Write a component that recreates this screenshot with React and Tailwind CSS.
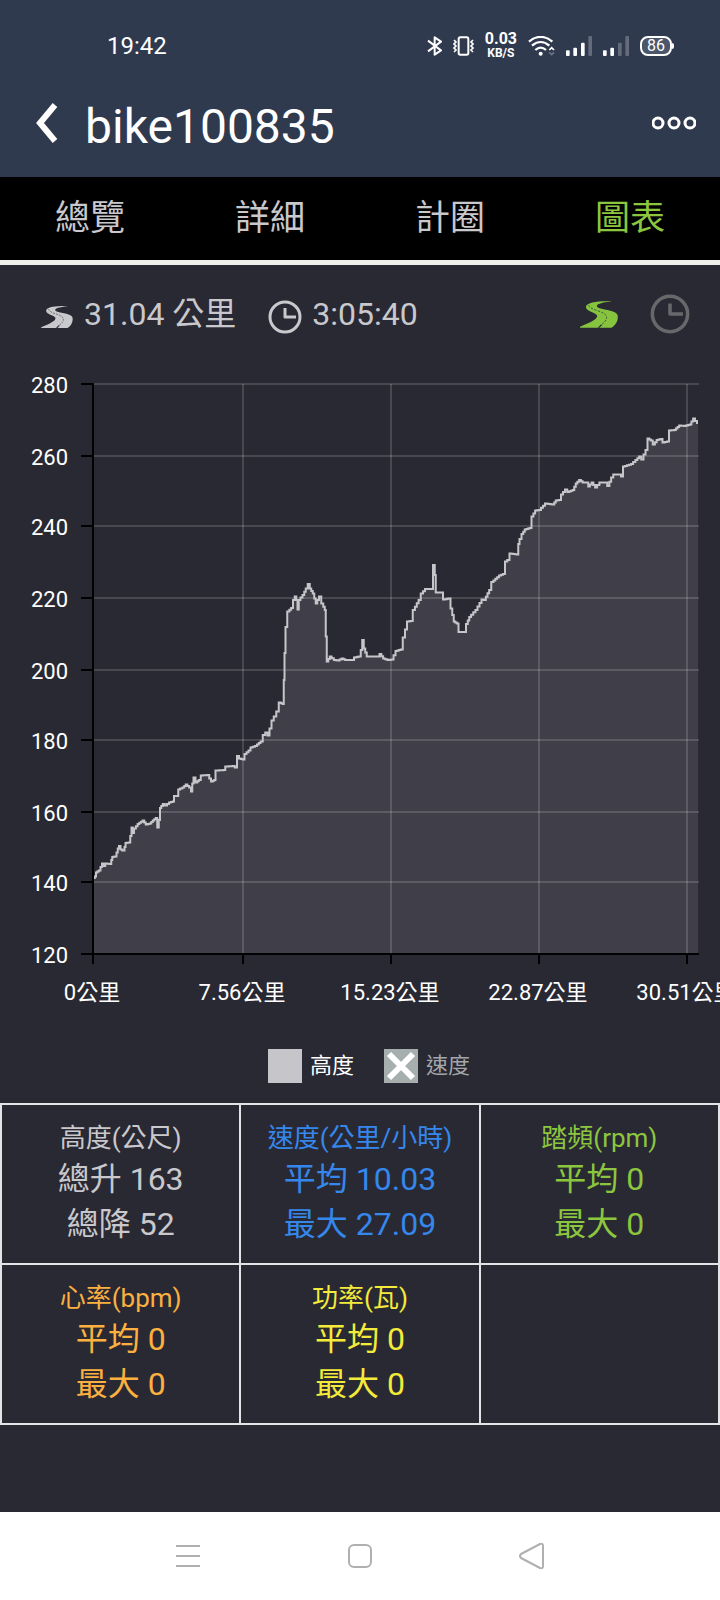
import React, { useState } from 'react';

const TABS = ['總覽', '詳細', '計圈', '圖表'];

const Y_TICKS = [
  { label: '280', y: 384 },
  { label: '260', y: 456 },
  { label: '240', y: 526 },
  { label: '220', y: 598 },
  { label: '200', y: 670 },
  { label: '180', y: 740 },
  { label: '160', y: 812 },
  { label: '140', y: 882 },
  { label: '120', y: 954 }
];

const X_TICKS = [
  { label: '0公里', x: 93 },
  { label: '7.56公里', x: 243 },
  { label: '15.23公里', x: 391 },
  { label: '22.87公里', x: 539 },
  { label: '30.51公里', x: 687 }
];

// altitude trace, in chart units
const ALTITUDE = `94,878 95.5,876.5 96.5,872.5 99.5,870.5 101.5,867 102.5,863.5 104.5,866 106,863.5 110.5,864 112,860
112.5,857 115.5,856.5 117.5,852.5 118,848.5 120,846 121,849.5 123.5,850.5 125.5,847 125.5,843 130,842.5 130.5,836
132.5,827.5 133,833 135,828.5 138.5,824 143.5,820.5 146.5,824.5 150.5,823.5 153.5,820.5 156.5,818 158,827.5 159.5,820
160.5,808 163.5,804 166,805.5 170,802.5 173.5,801.5 174.5,796 177.5,796 179,789.5 183.5,787.5 186.5,784.5 190,787.5
192,791.5 192.5,783.5 194.5,777.5 196.5,782.5 199.5,780 202,775.5 208.5,775 210,778.5 212,781.5 215,780 216,770.5
224.5,770 226,766.5 233.5,766 236,767.5 238,756 240,758.5 243.5,759.5 245.5,754 249.5,750.5 251.5,747.5 256,746
261.5,741.5 264,735 266.5,732.5 268.5,735.5 270.5,728.5 272.5,720.5 275,716.5 277.5,711.5 280,702.5 283.5,704
284,680 285,653 286,627 288.5,611.5 292,608 294,600 295.5,596.5 297,600 298,609.5 299.5,600 303.5,595 306.5,588.5
309,584 310.5,588.5 313.5,593.5 316.5,603.5 318,600 320,596.5 322.5,603.5 325.5,610 326,636.5 327.5,661.5 330.5,656.5
335,660 338.5,660.5 342.5,658.5 346,660 353.5,660 354.5,657.5 360,656.5 361.5,650 363,640 364.5,648.5 367.5,656.5
378.5,656.5 380.5,654 384,658.5 388.5,660 392.5,659.5 396.5,651 401.5,649.5 404,637.5 408,621.5 411.5,621 414,610
419.5,600 422,593.5 426,589 432,589 434,565 435.5,575 436,592.5 442,592.5 444,599.5 449.5,598.5 451.5,608.5
454.5,621.5 457.5,623.5 459.5,632 465,632 467,624 470,617 476.5,610 482.5,599.5 485,600 490,590 492.5,582 500,575.5
504,574 506,561.5 508.5,560 510.5,553.5 518,554.5 518.5,544 522.5,534 525.5,529.5 530.5,528 532.5,516.5 536,510.5
540,510 546,503.5 553.5,504.5 556.5,500.5 560,500 562,494.5 566,489.5 568.5,492 573.5,490 576.5,483.5 580,480
583.5,482.5 587.5,482.5 589,486.5 592.5,482.5 596,487.5 600.5,482.5 606,482.5 608.5,486 612,477.5 614.5,474.5
620,474.5 622,476.5 624,466.5 632,464 636.5,460 640,456.5 642.5,459.5 644.5,454.5 646.5,450 648.5,438.5 651.5,440.5
654,444.5 657.5,440 661.5,439 663.5,442.5 668,441.5 670,430.5 675,430 680,425.5 685,426 690.5,424.5 694,418.5
696,421 698,423`;

const toSteps = (text) => {
  const points = text.split(/\s+/).map((pair) => pair.split(',').map(Number));
  let path = `${points[0][0]} ${points[0][1]}`;
  for (let i = 1; i < points.length; i++) {
    const [x0, y0] = points[i - 1];
    const [x1, y1] = points[i];
    const count = Math.max(1, Math.round((x1 - x0) / 2));
    for (let k = 1; k <= count; k++) {
      path += `H${x0 + ((x1 - x0) * (k - 0.5)) / count}V${y0 + ((y1 - y0) * k) / count}`;
    }
    path += `H${x1}`;
  }
  return path;
};

const TRACE = toSteps(ALTITUDE);

const STATS = [
  [
    { title: '高度(公尺)', lines: ['總升 163', '總降 52'], color: 'text-[#c9c8cc]' },
    { title: '速度(公里/小時)', lines: ['平均 10.03', '最大 27.09'], color: 'text-[#3587ec]' },
    { title: '踏頻(rpm)', lines: ['平均 0', '最大 0'], color: 'text-[#8cc63f]' }
  ],
  [
    { title: '心率(bpm)', lines: ['平均 0', '最大 0'], color: 'text-[#fbb040]' },
    { title: '功率(瓦)', lines: ['平均 0', '最大 0'], color: 'text-[#f4ea3a]' },
    null
  ]
];

const RoadIcon = ({ className }) => (
  <svg viewBox="0 0 115 80" className={className} aria-hidden="true">
    <path
      fill="currentColor"
      d="M94 0C50-1 17 4 18 18C19 31 50 34 52 44C53 56 22 68 0 77V80H96C111 70 116 56 114 42C110 28 78 27 57 20C42 13 56 5 94 1Z"
    />
    <path d="M26 12C34 30 76 28 80 46C82 55 76 62 66 70" fill="none" stroke="#292933" strokeWidth="2" strokeDasharray="7 4" />
    <path d="M54 80L63 70L67 72L59 80Z" fill="#292933" />
  </svg>
);

const ClockIcon = ({ className }) => (
  <svg viewBox="0 0 34 34" className={className} fill="none" stroke="currentColor" strokeWidth="3" aria-hidden="true">
    <circle cx="17" cy="17" r="15" />
    <path d="M17 8V17H28" strokeLinejoin="round" />
  </svg>
);

const SignalIcon = ({ strong }) => (
  <svg viewBox="0 0 78 60" className="h-5 w-[26px]" fill="#fff" aria-hidden="true">
    <rect x="0" y="43" width="11" height="17" rx="3" />
    <rect x="22" y="35" width="11" height="25" rx="3" />
    <rect x="45" y="20" width="11" height="40" rx="3" fillOpacity={strong ? 1 : 0.25} />
    <rect x="67" y="0" width="11" height="60" rx="3" fillOpacity="0.25" />
  </svg>
);

const StatusBar = () => (
  <div className="flex h-[92px] items-center justify-between pl-[107px] pr-[46px]">
    <span className="text-2xl">19:42</span>
    <div className="flex items-center gap-[11px]">
      <svg viewBox="0 0 45 60" className="h-5 w-[15px]" fill="none" stroke="#fff" strokeWidth="6" strokeLinejoin="round" aria-hidden="true">
        <path d="M3 14L42 43L23 56V4L42 17L3 46" />
      </svg>
      <svg viewBox="0 0 63 60" className="h-5 w-[21px]" fill="none" stroke="#fff" strokeWidth="6" aria-hidden="true">
        <rect x="17" y="4" width="29" height="52" rx="5" />
        <path d="M3 12L9 18L3 24L9 30L3 36L9 42L3 48M60 12L54 18L60 24L54 30L60 36L54 42L60 48" strokeWidth="5" />
      </svg>
      <div className="flex flex-col items-center font-bold">
        <span className="text-base leading-[14px]">0.03</span>
        <span className="text-[12px] leading-[14px]">KB/S</span>
      </div>
      <svg viewBox="0 0 81 60" className="h-5 w-[27px]" fill="none" stroke="#fff" strokeWidth="7" aria-hidden="true">
        <path d="M3 17C24-2 52-2 73 17" />
        <path d="M12 29C28 15 48 15 64 29" />
        <path d="M22 42C32 33 44 33 54 42" />
        <circle cx="38" cy="53" r="6" fill="#fff" stroke="none" />
        <path d="M64 42L71 35L78 42" strokeWidth="5" />
        <path d="M64 49L71 56L78 49" strokeWidth="5" strokeOpacity="0.3" />
      </svg>
      <SignalIcon strong />
      <SignalIcon />
      <div className="flex items-center">
        <span className="flex h-5 w-8 items-center justify-center rounded-lg border-2 border-white bg-[#4c566a] text-base leading-4">
          86
        </span>
        <span className="h-[6px] w-[2px] rounded-r bg-white" />
      </div>
    </div>
  </div>
);

const AltitudeChart = ({ showAltitude }) => (
  <svg viewBox="0 363 720 653" className="block w-full" role="img" aria-label="高度">
    {showAltitude && <path d={`M93 954V878L${TRACE}V954Z`} fill="#403f49" />}
    <g stroke="#fff" strokeOpacity="0.15" strokeWidth="2">
      {Y_TICKS.slice(0, -1).map((t) => (
        <line key={t.label} x1="93" x2="699" y1={t.y} y2={t.y} />
      ))}
      {X_TICKS.slice(1).map((t) => (
        <line key={t.label} x1={t.x} x2={t.x} y1="384" y2="954" />
      ))}
    </g>
    {showAltitude && <path d={`M${TRACE}`} fill="none" stroke="#c6c5ca" strokeWidth="2" />}
    <g stroke="#000" strokeWidth="2">
      <line x1="93" x2="93" y1="383" y2="964" />
      <line x1="81" x2="699" y1="954" y2="954" />
      {Y_TICKS.map((t) => (
        <line key={t.label} x1="81" x2="93" y1={t.y} y2={t.y} />
      ))}
      {X_TICKS.map((t) => (
        <line key={t.label} x1={t.x} x2={t.x} y1="954" y2="964" />
      ))}
    </g>
    <g fill="#fff" fontSize="22">
      {Y_TICKS.map((t) => (
        <text key={t.label} x="68" y={t.y + 9} textAnchor="end">{t.label}</text>
      ))}
      {X_TICKS.map((t) => (
        <text key={t.label} x={t.x - 1} y="1000" textAnchor="middle">{t.label}</text>
      ))}
    </g>
  </svg>
);

const LegendItem = ({ label, checked, onChange }) => (
  <label className={`flex items-center gap-2 text-[22px] leading-[34px] ${checked ? 'text-white' : 'text-[#a3a6a9]'}`}>
    <span className="grid size-[34px]">
      <input
        type="checkbox"
        checked={checked}
        onChange={onChange}
        className="col-start-1 row-start-1 size-[34px] appearance-none bg-[#a7aeae] checked:bg-[#c6c5ca]"
      />
      {!checked && (
        <svg viewBox="0 0 34 34" className="pointer-events-none col-start-1 row-start-1" stroke="#fff" strokeWidth="6" aria-hidden="true">
          <path d="M5 5L29 29M29 5L5 29" />
        </svg>
      )}
    </span>
    {label}
  </label>
);

const App = () => {
  const [activeTab, setActiveTab] = useState('圖表');
  const [axis, setAxis] = useState('distance');
  const [showAltitude, setShowAltitude] = useState(true);
  const [showSpeed, setShowSpeed] = useState(false);

  return (
    <div className="flex min-h-screen flex-col overflow-hidden bg-[#292933] font-['Roboto','Noto_Sans_CJK_TC',sans-serif] text-[#c9c8cc]">
      <header className="bg-[#303a4f] pb-[15px] text-white">
        <StatusBar />
        <div className="flex h-[70px] items-center justify-between pl-9 pr-6">
          <div className="flex items-center gap-[27px]">
            <button type="button" aria-label="返回" className="mb-2">
              <svg viewBox="0 0 22 40" className="h-10 w-[22px]" fill="none" stroke="#fff" strokeWidth="6">
                <path d="M19 2L4 20L19 38" />
              </svg>
            </button>
            <h1 className="text-5xl leading-[56px]">bike100835</h1>
          </div>
          <button type="button" aria-label="更多" className="mb-2">
            <svg viewBox="0 0 44 14" className="h-[14px] w-11" fill="none" stroke="#fff" strokeWidth="3">
              <circle cx="6" cy="7" r="5" />
              <circle cx="22" cy="7" r="5" />
              <circle cx="38" cy="7" r="5" />
            </svg>
          </button>
        </div>
      </header>

      <nav className="grid h-[88px] grid-cols-4 border-b-[5px] border-[#eeeeec] bg-black">
        {TABS.map((tab) => (
          <button
            key={tab}
            type="button"
            onClick={() => setActiveTab(tab)}
            className={`text-[35px] leading-[48px] ${tab === activeTab ? 'text-[#8cc63f]' : 'text-[#c9c8cc]'}`}
          >
            {tab}
          </button>
        ))}
      </nav>

      <main className="flex-1">
        <div className="flex h-[98px] items-center justify-between pl-[41px] pr-[30px] text-[32px] leading-10">
          <div className="flex items-center">
            <RoadIcon className="mt-[6px] mr-[11px] h-[22px] w-8" />
            <span>31.04 公里</span>
            <ClockIcon className="mt-[6px] mr-[10px] ml-8 size-[34px]" />
            <span>3:05:40</span>
          </div>
          <div className="flex items-center gap-8">
            <button type="button" aria-label="距離" onClick={() => setAxis('distance')} className={axis === 'distance' ? 'text-[#86c440]' : 'text-[#68686c]'}>
              <RoadIcon className="h-[27px] w-[38px]" />
            </button>
            <button type="button" aria-label="時間" onClick={() => setAxis('time')} className={axis === 'time' ? 'text-[#86c440]' : 'text-[#68686c]'}>
              <ClockIcon className="size-10" />
            </button>
          </div>
        </div>

        <AltitudeChart showAltitude={showAltitude} />

        <div className="flex justify-center gap-[30px] pt-[33px] pb-5 pl-[18px]">
          <LegendItem label="高度" checked={showAltitude} onChange={() => setShowAltitude(!showAltitude)} />
          <LegendItem label="速度" checked={showSpeed} onChange={() => setShowSpeed(!showSpeed)} />
        </div>

        <table className="w-full table-fixed border-collapse text-center">
          <tbody>
            {STATS.map((row, i) => (
              <tr key={i} className="h-40">
                {row.map((cell, j) => (
                  <td key={j} className={`border-2 border-[#e4e4e8] p-0 pt-[15px] align-top ${cell ? cell.color : ''}`}>
                    {cell && (
                      <>
                        <div className="h-[37px] text-[26px] leading-[37px]">{cell.title}</div>
                        {cell.lines.map((line) => (
                          <div key={line} className="h-[45px] text-[32px] leading-[45px]">{line}</div>
                        ))}
                      </>
                    )}
                  </td>
                ))}
              </tr>
            ))}
          </tbody>
        </table>
      </main>

      <footer className="flex h-[88px] items-center justify-around bg-white px-[102px]">
        <button type="button" aria-label="最近">
          <svg viewBox="0 0 26 26" className="size-[26px]" fill="none" stroke="#b0b0b0" strokeWidth="2">
            <path d="M1 3H25M1 13H25M1 23H25" />
          </svg>
        </button>
        <button type="button" aria-label="主畫面">
          <svg viewBox="0 0 26 26" className="size-[26px]" fill="none" stroke="#b0b0b0" strokeWidth="2">
            <rect x="2" y="2" width="22" height="22" rx="5" />
          </svg>
        </button>
        <button type="button" aria-label="上一頁">
          <svg viewBox="0 0 26 26" className="size-[26px]" fill="none" stroke="#b0b0b0" strokeWidth="2" strokeLinejoin="round">
            <path d="M2 11L21 1Q24 0 24 3V23Q24 26 21 25L2 15Q0 13 2 11Z" />
          </svg>
        </button>
      </footer>
    </div>
  );
};

export default App;
